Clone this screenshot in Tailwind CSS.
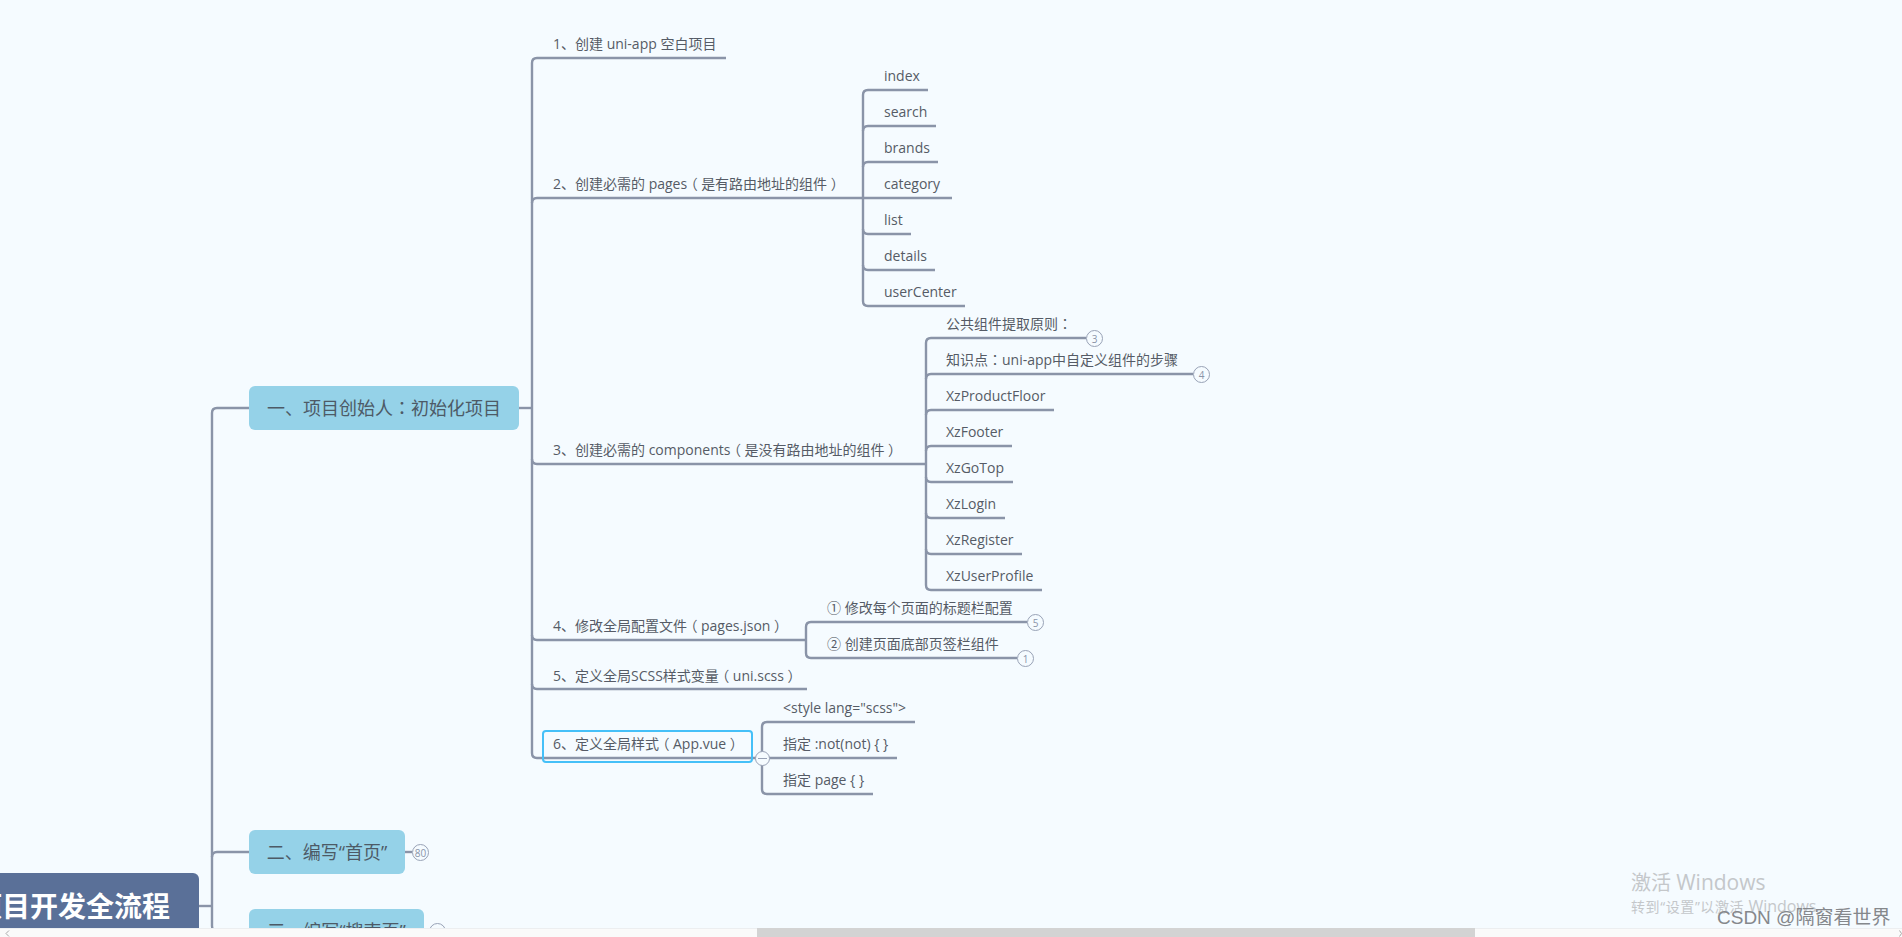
<!DOCTYPE html>
<html lang="zh">
<head>
<meta charset="utf-8">
<script src="https://cdn.jsdelivr.net/npm/@tailwindcss/browser@4"></script>
<title>Mind map</title>
</head>
<body class="m-0 overflow-hidden">
<div class="relative w-[1902px] h-[937px] overflow-hidden bg-[#f5fbff] text-[14px] leading-[20px] text-[#555b66] font-['Open_Sans','Noto_Sans_CJK_SC',sans-serif]">

<svg class="absolute left-0 top-0" width="1902" height="937" fill="none" stroke="#8a94a8" stroke-width="2.4">
  <path d="M199 906H212"/>
  <path d="M249 408H217Q212 408 212 413V926Q212 931 217 931H249"/>
  <path d="M212 857Q212 852 217 852H249"/>
  <path d="M405 852H412"/>
  <path d="M519 408H532"/>
  <path d="M726 58H537Q532 58 532 63V753Q532 758 537 758H746"/>
  <path d="M532 203Q532 198 537 198H863"/>
  <path d="M532 459Q532 464 537 464H926"/>
  <path d="M532 635Q532 640 537 640H806"/>
  <path d="M532 684Q532 689 537 689H807"/>
  <path d="M928 90H868Q863 90 863 95V301Q863 306 868 306H965"/>
  <path d="M863 131Q863 126 868 126H936"/>
  <path d="M863 167Q863 162 868 162H938"/>
  <path d="M863 198H952"/>
  <path d="M863 229Q863 234 868 234H911"/>
  <path d="M863 265Q863 270 868 270H935"/>
  <path d="M1086 338H931Q926 338 926 343V585Q926 590 931 590H1042"/>
  <path d="M926 379Q926 374 931 374H1193"/>
  <path d="M926 415Q926 410 931 410H1054"/>
  <path d="M926 451Q926 446 931 446H1012"/>
  <path d="M926 477Q926 482 931 482H1013"/>
  <path d="M926 513Q926 518 931 518H1005"/>
  <path d="M926 549Q926 554 931 554H1022"/>
  <path d="M1027 622H811Q806 622 806 627V653Q806 658 811 658H1017"/>
  <path d="M915 722H767Q762 722 762 727V789Q762 794 767 794H873"/>
  <path d="M746 758H897"/>
</svg>

<!-- root -->
<div class="absolute left-[-120px] top-[873px] w-[319px] h-[66px] rounded-[6px] bg-[#5a7098] flex items-center justify-end pr-[29px]">
  <span class="text-[28px] leading-[40px] font-bold text-white whitespace-nowrap">项目开发全流程</span>
</div>

<!-- level 1 -->
<div class="absolute left-[249px] top-[386px] w-[270px] h-[44px] rounded-[6px] bg-[#95d2e8] flex items-center justify-center text-[18px] text-[#4d5a66] whitespace-nowrap"><span>一、项目创始人<span lang="zh-TW" class="leading-[0] font-['Noto_Sans_CJK_TC']">：</span>初始化项目</span></div>
<div class="absolute left-[249px] top-[830px] w-[156px] h-[44px] rounded-[6px] bg-[#95d2e8] flex items-center justify-center text-[18px] text-[#4d5a66] whitespace-nowrap">二、编写“首页”</div>
<div class="absolute left-[249px] top-[909px] w-[175px] h-[44px] rounded-[6px] bg-[#95d2e8] flex items-center justify-center text-[18px] text-[#4d5a66] whitespace-nowrap">三、编写“搜索页”</div>

<!-- selection box -->
<div class="absolute left-[542px] top-[730px] w-[211px] h-[33px] rounded-[4px] border-2 border-[#45c0f8]"></div>

<!-- level 2 text -->
<span class="absolute left-[553px] top-[34px] whitespace-nowrap">1、创建 uni-app 空白项目</span>
<span class="absolute left-[553px] top-[174px] whitespace-nowrap">2、创建必需的 pages<span class="inline-block w-[14px] text-center [font-feature-settings:'halt']">（</span>是有路由地址的组件<span class="inline-block w-[14px] text-center [font-feature-settings:'halt']">）</span></span>
<span class="absolute left-[553px] top-[440px] whitespace-nowrap">3、创建必需的 components<span class="inline-block w-[14px] text-center [font-feature-settings:'halt']">（</span>是没有路由地址的组件<span class="inline-block w-[14px] text-center [font-feature-settings:'halt']">）</span></span>
<span class="absolute left-[553px] top-[616px] whitespace-nowrap">4、修改全局配置文件<span class="inline-block w-[14px] text-center [font-feature-settings:'halt']">（</span>pages.json<span class="inline-block w-[14px] text-center [font-feature-settings:'halt']">）</span></span>
<span class="absolute left-[553px] top-[666px] whitespace-nowrap">5、定义全局SCSS样式变量<span class="inline-block w-[14px] text-center [font-feature-settings:'halt']">（</span>uni.scss<span class="inline-block w-[14px] text-center [font-feature-settings:'halt']">）</span></span>
<span class="absolute left-[553px] top-[734px] whitespace-nowrap">6、定义全局样式<span class="inline-block w-[14px] text-center [font-feature-settings:'halt']">（</span>App.vue<span class="inline-block w-[14px] text-center [font-feature-settings:'halt']">）</span></span>

<!-- pages -->
<span class="absolute left-[884px] top-[66px] whitespace-nowrap">index</span>
<span class="absolute left-[884px] top-[102px] whitespace-nowrap">search</span>
<span class="absolute left-[884px] top-[138px] whitespace-nowrap">brands</span>
<span class="absolute left-[884px] top-[174px] whitespace-nowrap">category</span>
<span class="absolute left-[884px] top-[210px] whitespace-nowrap">list</span>
<span class="absolute left-[884px] top-[246px] whitespace-nowrap">details</span>
<span class="absolute left-[884px] top-[282px] whitespace-nowrap">userCenter</span>

<!-- components -->
<span class="absolute left-[946px] top-[314px] whitespace-nowrap">公共组件提取原则<span lang="zh-TW" class="leading-[0] font-['Noto_Sans_CJK_TC']">：</span></span>
<span class="absolute left-[946px] top-[350px] whitespace-nowrap">知识点<span lang="zh-TW" class="leading-[0] font-['Noto_Sans_CJK_TC']">：</span>uni-app中自定义组件的步骤</span>
<span class="absolute left-[946px] top-[386px] whitespace-nowrap">XzProductFloor</span>
<span class="absolute left-[946px] top-[422px] whitespace-nowrap">XzFooter</span>
<span class="absolute left-[946px] top-[458px] whitespace-nowrap">XzGoTop</span>
<span class="absolute left-[946px] top-[494px] whitespace-nowrap">XzLogin</span>
<span class="absolute left-[946px] top-[530px] whitespace-nowrap">XzRegister</span>
<span class="absolute left-[946px] top-[566px] whitespace-nowrap">XzUserProfile</span>

<!-- pages.json -->
<span class="absolute left-[827px] top-[598px] whitespace-nowrap">① 修改每个页面的标题栏配置</span>
<span class="absolute left-[827px] top-[634px] whitespace-nowrap">② 创建页面底部页签栏组件</span>

<!-- App.vue -->
<span class="absolute left-[783px] top-[698px] whitespace-nowrap">&lt;style lang="scss"&gt;</span>
<span class="absolute left-[783px] top-[734px] whitespace-nowrap">指定 :not(not) { }</span>
<span class="absolute left-[783px] top-[770px] whitespace-nowrap">指定 page { }</span>

<!-- badges -->
<div class="absolute left-[1086px] top-[330px] w-[17px] h-[17px] rounded-full border border-[#98a2b6] bg-[#f5fbff] flex items-center justify-center text-[10px] leading-none text-[#8a94a8]">3</div>
<div class="absolute left-[1193px] top-[366px] w-[17px] h-[17px] rounded-full border border-[#98a2b6] bg-[#f5fbff] flex items-center justify-center text-[10px] leading-none text-[#8a94a8]">4</div>
<div class="absolute left-[1027px] top-[614px] w-[17px] h-[17px] rounded-full border border-[#98a2b6] bg-[#f5fbff] flex items-center justify-center text-[10px] leading-none text-[#8a94a8]">5</div>
<div class="absolute left-[1017px] top-[650px] w-[17px] h-[17px] rounded-full border border-[#98a2b6] bg-[#f5fbff] flex items-center justify-center text-[10px] leading-none text-[#8a94a8]">1</div>
<div class="absolute left-[412px] top-[844px] w-[17px] h-[17px] rounded-full border border-[#98a2b6] bg-[#f5fbff] flex items-center justify-center text-[10px] leading-none text-[#8a94a8]">80</div>
<div class="absolute left-[429px] top-[923px] w-[17px] h-[17px] rounded-full border border-[#98a2b6] bg-[#f5fbff]"></div>

<!-- collapse toggle -->
<div class="absolute left-[755px] top-[751px] w-[15px] h-[15px] rounded-full border border-[#98a2b6] bg-[#f5fbff] flex items-center justify-center"><div class="w-[9px] h-px bg-[#98a2b6]"></div></div>

<!-- horizontal scrollbar -->
<div class="absolute left-0 right-0 top-[928px] h-[9px] bg-[#fafafa] border-t border-[#eceef0] flex items-center">
  <svg class="absolute left-[5px] top-[1px]" width="5" height="7" viewBox="0 0 5 7" fill="none" stroke="#a8a8a8"><path d="M4 0.5L1 3.5L4 6.5"/></svg>
  <svg class="absolute right-0 top-[1px]" width="3" height="7" viewBox="0 0 3 7" fill="none" stroke="#a8a8a8"><path d="M0.5 0.5L2.5 3.5L0.5 6.5"/></svg>
  <div class="absolute left-[757px] w-[718px] top-[-1px] h-[9px] bg-[#d3d3d3]"></div>
</div>

<!-- activation watermark -->
<div class="absolute left-[1631px] top-[868px] text-[20px] leading-[28px] text-[#c4c7ca] whitespace-nowrap">激活 <span class="text-[21px]">Windows</span></div>
<div class="absolute left-[1631px] top-[896px] text-[14px] leading-[20px] tracking-[0.6px] text-[#c4c7ca] whitespace-nowrap">转到“设置”以激活 <span class="text-[16px] tracking-normal">Windows</span>。</div>
<div class="absolute left-[1717px] top-[905px] text-[19px] leading-[26px] text-[#85888c] whitespace-nowrap font-['Liberation_Sans','Noto_Sans_CJK_SC',sans-serif]">CSDN @隔窗看世界</div>
</div>
</body>
</html>
